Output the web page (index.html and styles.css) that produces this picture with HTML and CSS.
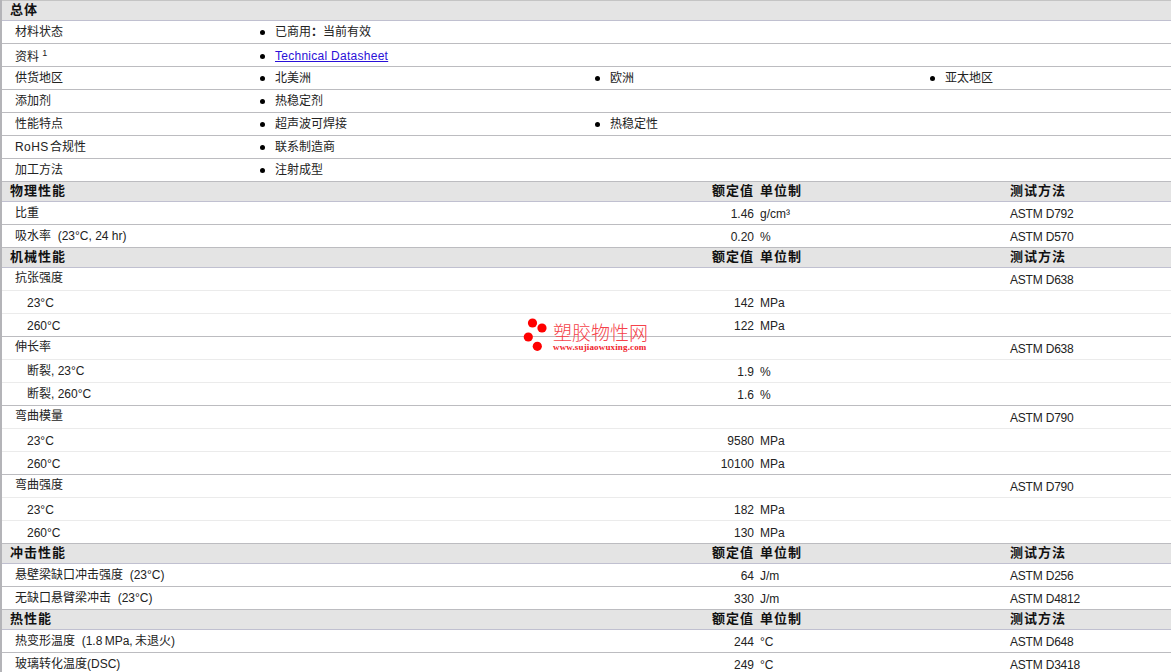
FILE: index.html
```html
<!DOCTYPE html>
<html lang="zh">
<head>
<meta charset="utf-8">
<title>物性表</title>
<link rel="stylesheet" href="styles.css">
</head>
<body>
<div class="sheet">
  <div class="head first"><span class="title">总体</span></div>
  <div class="row"><span class="label">材料状态</span><div class="vals"><span class="val">已商用<span class="tc">：</span>当前有效</span></div></div>
  <div class="row"><span class="label low">资料 <sup>1</sup></span><div class="vals"><a class="val link" href="#">Technical Datasheet</a></div></div>
  <div class="row"><span class="label">供货地区</span><div class="vals"><span class="val">北美洲</span><span class="val">欧洲</span><span class="val">亚太地区</span></div></div>
  <div class="row"><span class="label">添加剂</span><div class="vals"><span class="val">热稳定剂</span></div></div>
  <div class="row"><span class="label">性能特点</span><div class="vals"><span class="val">超声波可焊接</span><span class="val">热稳定性</span></div></div>
  <div class="row"><span class="label"><span class="latin">RoHS</span> 合规性</span><div class="vals"><span class="val">联系制造商</span></div></div>
  <div class="row"><span class="label">加工方法</span><div class="vals"><span class="val">注射成型</span></div></div>

  <div class="head"><span class="title">物理性能</span><span class="num">额定值</span><span class="unit">单位制</span><span class="test">测试方法</span></div>
  <div class="row"><span class="label">比重</span><span class="num">1.46</span><span class="unit">g/cm³</span><span class="test">ASTM D792</span></div>
  <div class="row"><span class="label">吸水率&nbsp;&nbsp;(23°C, 24 hr)</span><span class="num">0.20</span><span class="unit">%</span><span class="test">ASTM D570</span></div>

  <div class="head"><span class="title">机械性能</span><span class="num">额定值</span><span class="unit">单位制</span><span class="test">测试方法</span></div>
  <div class="row sub"><span class="label group">抗张强度</span><span class="num"></span><span class="unit"></span><span class="test">ASTM D638</span></div>
  <div class="row sub"><span class="label inner digits">23°C</span><span class="num">142</span><span class="unit">MPa</span></div>
  <div class="row"><span class="label inner digits">260°C</span><span class="num">122</span><span class="unit">MPa</span></div>
  <div class="row sub"><span class="label group">伸长率</span><span class="num"></span><span class="unit"></span><span class="test">ASTM D638</span></div>
  <div class="row sub"><span class="label inner">断裂, 23°C</span><span class="num">1.9</span><span class="unit">%</span></div>
  <div class="row"><span class="label inner">断裂, 260°C</span><span class="num">1.6</span><span class="unit">%</span></div>
  <div class="row sub"><span class="label group">弯曲模量</span><span class="num"></span><span class="unit"></span><span class="test">ASTM D790</span></div>
  <div class="row sub"><span class="label inner digits">23°C</span><span class="num">9580</span><span class="unit">MPa</span></div>
  <div class="row"><span class="label inner digits">260°C</span><span class="num">10100</span><span class="unit">MPa</span></div>
  <div class="row sub"><span class="label group">弯曲强度</span><span class="num"></span><span class="unit"></span><span class="test">ASTM D790</span></div>
  <div class="row sub"><span class="label inner digits">23°C</span><span class="num">182</span><span class="unit">MPa</span></div>
  <div class="row"><span class="label inner digits">260°C</span><span class="num">130</span><span class="unit">MPa</span></div>

  <div class="head"><span class="title">冲击性能</span><span class="num">额定值</span><span class="unit">单位制</span><span class="test">测试方法</span></div>
  <div class="row"><span class="label">悬壁梁缺口冲击强度&nbsp;&nbsp;(23°C)</span><span class="num">64</span><span class="unit">J/m</span><span class="test">ASTM D256</span></div>
  <div class="row"><span class="label">无缺口悬臂梁冲击&nbsp;&nbsp;(23°C)</span><span class="num">330</span><span class="unit">J/m</span><span class="test">ASTM D4812</span></div>

  <div class="head"><span class="title">热性能</span><span class="num">额定值</span><span class="unit">单位制</span><span class="test">测试方法</span></div>
  <div class="row"><span class="label">热变形温度&nbsp;&nbsp;(<span class="tight">1.8 MPa, </span>未退火)</span><span class="num">244</span><span class="unit">°C</span><span class="test">ASTM D648</span></div>
  <div class="row"><span class="label">玻璃转化温度(DSC)</span><span class="num">249</span><span class="unit">°C</span><span class="test">ASTM D3418</span></div>

  <div class="mark">
    <svg class="mark-dots" width="28" height="36" viewBox="0 0 28 36"><circle cx="10.5" cy="6" r="4.6"/><circle cx="20" cy="11" r="4.6"/><circle cx="6.3" cy="20" r="4.6"/><circle cx="15.3" cy="29.3" r="4.6"/></svg>
    <div class="mark-text"><span class="mark-cn">塑胶物性网</span><span class="mark-url">www.sujiaowuxing.com</span></div>
  </div>
</div>
</body>
</html>
```
FILE: styles.css
```css
html, body { margin: 0; padding: 0; background: #fff; }
body {
  font-family: "Liberation Sans", "Noto Sans CJK SC", sans-serif;
  font-size: 12px;
  color: #222;
  overflow: hidden;
  height: 672px;
}
.sheet {
  position: relative;
  border-left: 2px solid #b4b4b8;
  width: 1169px;
}
.head, .row {
  display: flex;
  box-sizing: border-box;
  white-space: nowrap;
}
.head {
  height: 20px;
  background: #e4e4e4;
  border-bottom: 1px solid #c0c0d0;
  line-height: 17px;
  font-weight: bold;
  font-size: 13px;
  letter-spacing: 1px;
  color: #111;
}
.head.first { height: 21px; border-top: 1px solid #c4c4c4; }
.head .title { width: 652px; padding-left: 8px; box-sizing: border-box; flex: none; }
.head .num, .head .unit, .head .test { padding-top: 0; }
.row {
  height: 23px;
  border-bottom: 1px solid #bcbcc0;
  line-height: 23px;
}
.row.sub { border-bottom-color: #ebebeb; }
.label { padding-left: 13px; box-sizing: border-box; width: 652px; flex: none; }
.row:has(.vals) > .label { width: 260px; }
.label.inner { padding-left: 25px; }
.label.group { line-height: 21px; }
.label.digits { line-height: 25px; }
.label.low { line-height: 26px; }
.latin { letter-spacing: .4px; margin-right: -2px; }
.tight { word-spacing: -1px; }
sup { font-size: 9px; line-height: 0; vertical-align: 5px; }
.num { width: 100px; text-align: right; flex: none; }
.unit { width: 256px; padding-left: 6px; box-sizing: border-box; flex: none; }
.row .num, .row .unit, .row .test { padding-top: 1px; }
.test { flex: none; }
.row .test { letter-spacing: -.2px; }
.vals { display: grid; grid-template-columns: 335px 335px 1fr; flex: 1; min-width: 0; }
.val {
  padding-left: 13px;
  box-sizing: border-box;
  position: relative;
}
.val::before {
  content: "";
  position: absolute;
  left: -2px;
  top: 9px;
  width: 5px;
  height: 5px;
  border-radius: 50%;
  background: #000;
}
.tc { font-family: "Noto Sans CJK TC", sans-serif; font-weight: bold; line-height: 0; vertical-align: baseline; }
.link { color: #2a10d8; text-decoration: underline; line-height: 25px; letter-spacing: .27px; }
.link::before { top: 10px; }
.mark {
  position: absolute;
  left: 520px;
  top: 317px;
  display: flex;
  gap: 3px;
  color: #f0232b;
  pointer-events: none;
}
.mark-dots circle { fill: #f00; }
.mark-text { display: flex; flex-direction: column; padding-top: 8px; }
.mark-cn { font-size: 19px; line-height: 17px; font-weight: 300; color: #f5424a; }
.mark-url { font-family: "Liberation Serif", serif; font-weight: bold; font-size: 9px; line-height: 10px; letter-spacing: .15px; }
```
